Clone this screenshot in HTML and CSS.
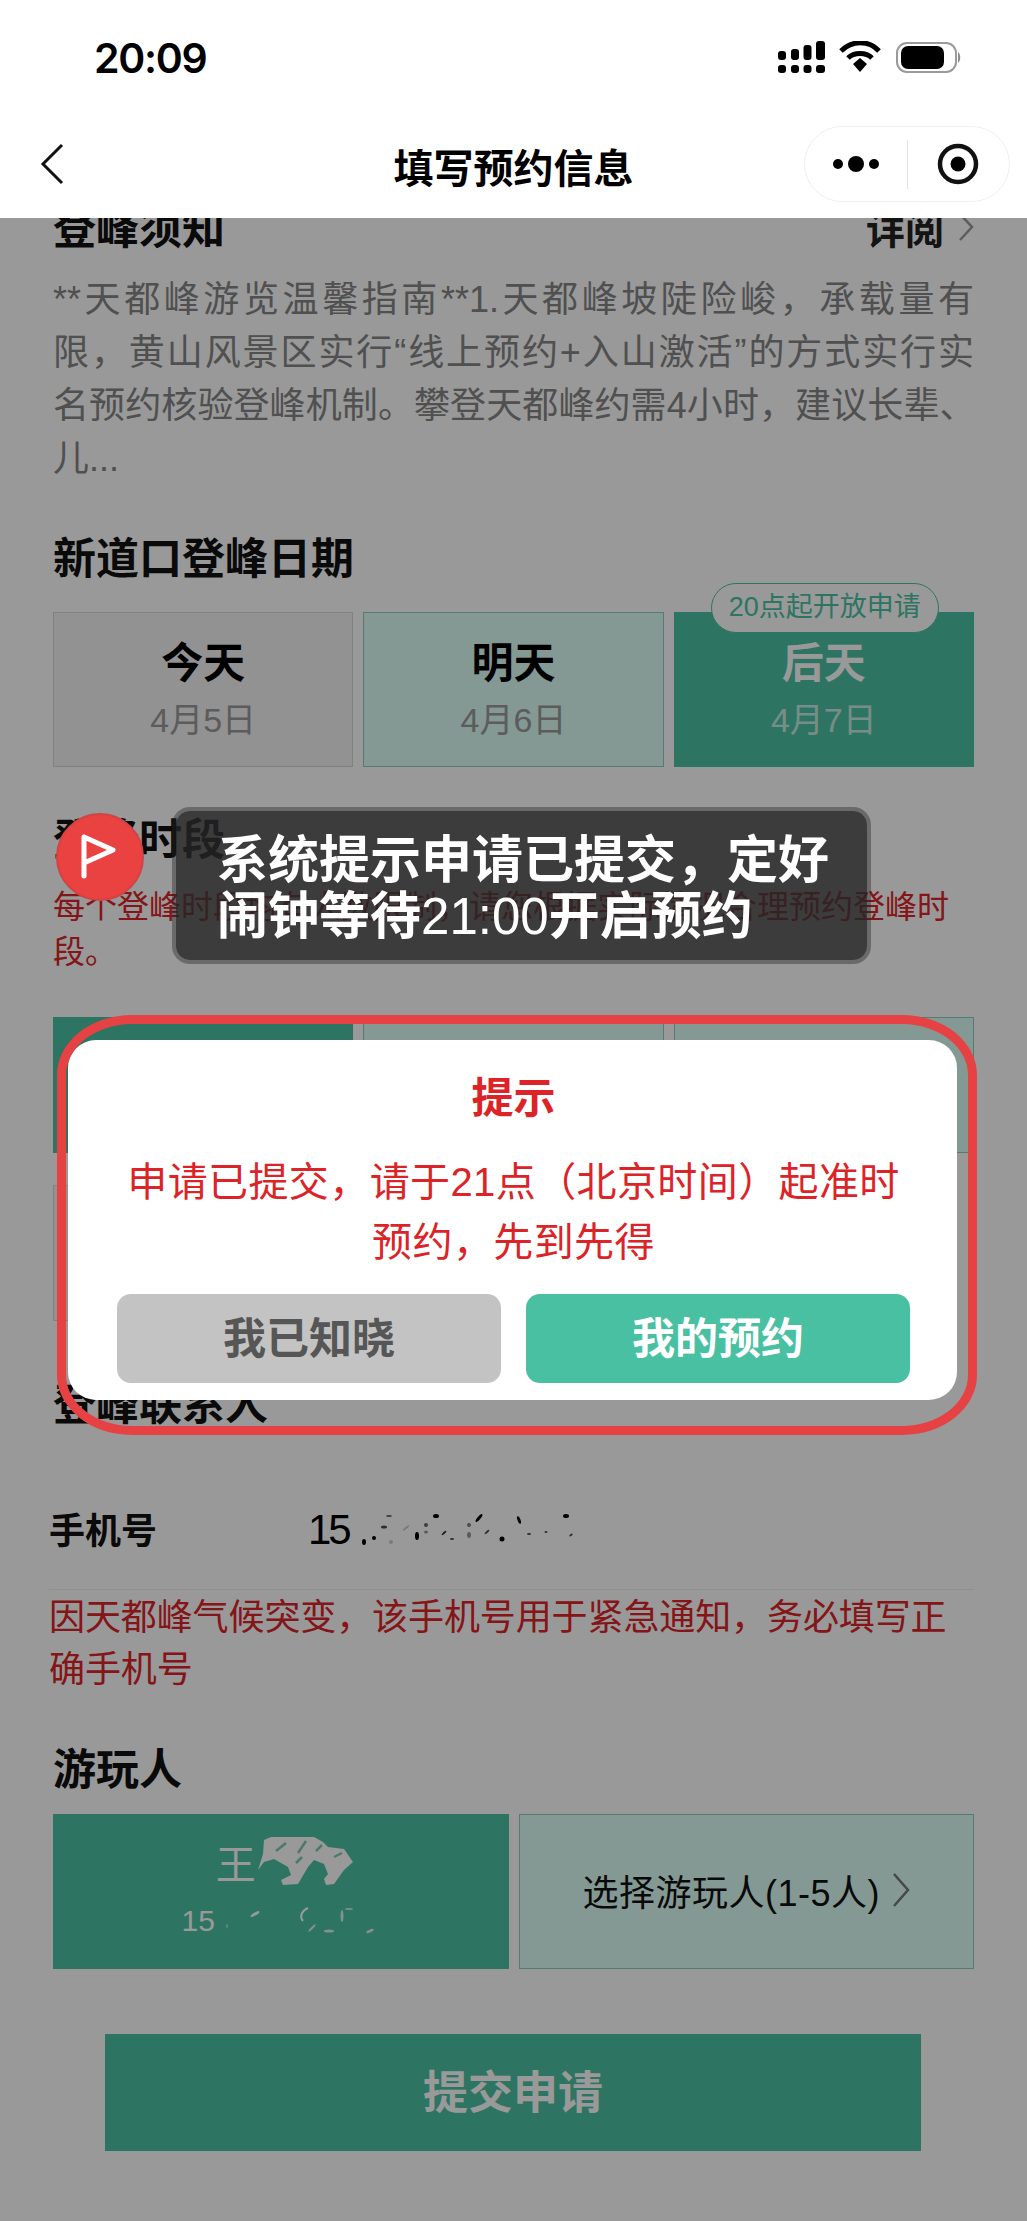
FILE: index.html
```html
<!DOCTYPE html>
<html lang="zh-CN">
<head>
    <meta charset="UTF-8">
    <meta name="viewport" content="width=device-width, initial-scale=1.0">
    <title>填写预约信息</title>
    <link rel="stylesheet" href="styles.css">
</head>
<body>
    <div class="screen">
        <div class="statusbar">
            <span class="time">20:09</span>
            <svg class="status-icons" width="183" height="34" viewBox="0 0 183 34">
                <!-- signal -->
                <rect x="0" y="10" width="8" height="9" rx="3"/>
                <rect x="13" y="8" width="8" height="11" rx="3"/>
                <rect x="25.500" y="4" width="8" height="15" rx="3"/>
                <rect x="38" y="0" width="9" height="19" rx="3"/>
                <rect x="0" y="24" width="8" height="8" rx="3"/>
                <rect x="13" y="24" width="8" height="8" rx="3"/>
                <rect x="25.500" y="24" width="8" height="8" rx="3"/>
                <rect x="38" y="24" width="9" height="8" rx="3"/>
                <!-- wifi -->
                <path d="M63 10 C74 -1 91 -1 101 10" fill="none" stroke="#000" stroke-width="5"/>
                <path d="M70 17 C76 11 88 11 94 17" fill="none" stroke="#000" stroke-width="5"/>
                <path d="M75 23 L82 17 L89 23 L82 31 Z"/>
                <!-- battery -->
                <rect x="119" y="2" width="59" height="29" rx="10" fill="none" stroke="#9a9a9a" stroke-width="2"/>
                <rect x="123" y="5" width="43" height="23" rx="7"/>
                <path d="M180 11 C183 13 183 20 180 22 Z" fill="#8e8e8e"/>
            </svg>
        </div>

        <div class="navbar">
            <svg class="back" width="24" height="42" viewBox="0 0 24 42">
                <path d="M22 2 L3 21 L22 40" fill="none" stroke="#111" stroke-width="3"/>
            </svg>
            <div class="nav-title">填写预约信息</div>
            <div class="capsule">
                <div class="cap-btn">
                    <svg width="46" height="16" viewBox="0 0 46 16">
                        <circle cx="5" cy="8" r="5"/>
                        <circle cx="23" cy="8" r="8"/>
                        <circle cx="41" cy="8" r="5"/>
                    </svg>
                </div>
                <span class="cap-line"></span>
                <div class="cap-btn">
                    <svg width="42" height="42" viewBox="0 0 42 42">
                        <circle cx="21" cy="21" r="18" fill="none" stroke="#111" stroke-width="4.500"/>
                        <circle cx="21" cy="21" r="7.500"/>
                    </svg>
                </div>
            </div>
        </div>

        <div class="scroll">
            <div class="content">
                <div class="heading-row">
                    <h2 class="heading">登峰须知</h2>
                    <div class="more">详阅
                        <svg class="chev" width="16" height="30" viewBox="0 0 16 30">
                            <path d="M2 2 L14 15 L2 28" fill="none" stroke="#999" stroke-width="2.500"/>
                        </svg>
                    </div>
                </div>
                <p class="notice">
                    <span class="notice-line">**天都峰游览温馨指南**1.天都峰坡陡险峻，承载量有</span>
                    <span class="notice-line">限，黄山风景区实行“线上预约+入山激活”的方式实行实</span>
                    <span class="notice-line notice-tight">名预约核验登峰机制。攀登天都峰约需4小时，建议长辈、</span>
                    <span class="notice-end">儿...</span>
                </p>

                <h2 class="heading date-heading">新道口登峰日期</h2>
                <div class="tile-grid">
                    <div class="tile tile-off">
                        <div class="tile-name">今天</div>
                        <div class="tile-date">4月5日</div>
                    </div>
                    <div class="tile tile-free">
                        <div class="tile-name">明天</div>
                        <div class="tile-date">4月6日</div>
                    </div>
                    <div class="tile tile-on">
                        <span class="pill">20点起开放申请</span>
                        <div class="tile-name">后天</div>
                        <div class="tile-date">4月7日</div>
                    </div>
                </div>

                <h2 class="heading slot-heading">登峰时段</h2>
                <p class="warn slot-warn">每个登峰时段均有人数限制，请您根据实际情况合理预约登峰时<br>段。</p>
                <div class="slot-grid">
                    <div class="slot tile-on"></div>
                    <div class="slot tile-free"></div>
                    <div class="slot tile-free"></div>
                    <div class="slot tile-off"></div>
                </div>

                <h2 class="heading contact-heading">登峰联系人</h2>
                <div class="phone-row">
                    <span class="phone-label">手机号</span>
                    <span class="phone-value">15</span>
                    <svg class="specks" width="230" height="50" viewBox="0 0 230 50">
                        <ellipse cx="10" cy="37" rx="2" ry="3"/>
                        <ellipse cx="20" cy="33" rx="2" ry="2"/>
                        <ellipse cx="30" cy="22" rx="3" ry="1.500" opacity="0.7"/>
                        <ellipse cx="35" cy="11" rx="3" ry="1" opacity="0.6"/>
                        <ellipse cx="37" cy="37" rx="2" ry="2" opacity="0.2"/>
                        <ellipse cx="52" cy="23" rx="4" ry="1" opacity="0.2" transform="rotate(-40 52 23)"/>
                        <ellipse cx="63" cy="31" rx="2" ry="4"/>
                        <ellipse cx="72" cy="20" rx="2" ry="2" opacity="0.6"/>
                        <ellipse cx="72" cy="27" rx="2" ry="1.500" opacity="0.4"/>
                        <ellipse cx="82" cy="11" rx="3" ry="2"/>
                        <ellipse cx="90" cy="28" rx="3" ry="1" opacity="0.8" transform="rotate(-40 90 28)"/>
                        <ellipse cx="98" cy="34" rx="2" ry="1" opacity="0.7"/>
                        <ellipse cx="115" cy="20" rx="2" ry="2" opacity="0.5"/>
                        <ellipse cx="115" cy="30" rx="2" ry="3" opacity="0.4"/>
                        <ellipse cx="125" cy="13" rx="5" ry="1.500" transform="rotate(-50 125 13)"/>
                        <ellipse cx="133" cy="27" rx="3" ry="1" opacity="0.7" transform="rotate(-40 133 27)"/>
                        <ellipse cx="148" cy="34" rx="2.500" ry="2.500"/>
                        <ellipse cx="165" cy="15" rx="1.500" ry="4" transform="rotate(-20 165 15)"/>
                        <ellipse cx="175" cy="29" rx="2" ry="1" opacity="0.7"/>
                        <ellipse cx="192" cy="27" rx="1.500" ry="1" opacity="0.7"/>
                        <ellipse cx="212" cy="11" rx="3" ry="2"/>
                        <ellipse cx="217" cy="30" rx="2" ry="1" opacity="0.7" transform="rotate(-40 217 30)"/>
                    </svg>
                </div>
                <p class="warn contact-warn">因天都峰气候突变，该手机号用于紧急通知，务必填写正<br>确手机号</p>

                <h2 class="heading visitor-heading">游玩人</h2>
                <div class="visitor-grid">
                    <div class="visitor tile-on">
                        <div class="visitor-name">王
                            <svg class="smudge" width="100" height="50" viewBox="0 0 100 50">
                                <path d="M8 3 L15 0 L58 0 L67 5 L72 10 L88 12 L97 25 L88 33 L78 47 L70 48 L68 42 L72 37 L68 27 L58 23 L52 30 L42 47 L27 48 L25 43 L35 38 L32 30 L18 22 L8 25 L2 33 L7 17 Z" fill="#fff"/>
                                <path d="M20 14 L30 6 M42 16 L50 4 M60 14 L66 8 M78 20 L86 16 M40 26 L46 20" stroke="#7fcab5" stroke-width="2.500" fill="none"/>
                            </svg>
                        </div>
                        <div class="visitor-phone">15
                            <svg class="specks" width="160" height="30" viewBox="0 0 160 30" fill="#fff">
                                <ellipse cx="7" cy="20" rx="1" ry="2" opacity="0.5"/>
                                <ellipse cx="35" cy="8" rx="5" ry="1.500" transform="rotate(-30 35 8)"/>
                                <path d="M88 2 C80 6 80 12 83 15" fill="none" stroke="#fff" stroke-width="2"/>
                                <ellipse cx="92" cy="22" rx="5" ry="1" opacity="0.8" transform="rotate(-45 92 22)"/>
                                <ellipse cx="109" cy="25" rx="5" ry="1.500" opacity="0.8"/>
                                <ellipse cx="122" cy="10" rx="1.500" ry="6" opacity="0.8"/>
                                <ellipse cx="129" cy="3" rx="4" ry="1" opacity="0.7"/>
                                <ellipse cx="150" cy="25" rx="4" ry="1.500" opacity="0.8" transform="rotate(-25 150 25)"/>
                            </svg>
                        </div>
                    </div>
                    <div class="visitor tile-free visitor-pick">选择游玩人(1-5人)
                        <svg class="chev" width="18" height="36" viewBox="0 0 18 36">
                            <path d="M2 2 L16 18 L2 34" fill="none" stroke="#777" stroke-width="2.500"/>
                        </svg>
                    </div>
                </div>

                <div class="submit">提交申请</div>
            </div>
        </div>

        <div class="overlay"></div>

        <div class="flag">
            <svg width="42" height="50" viewBox="0 0 42 50">
                <path d="M5 5 L5 44 M5 5 L34 18 L5 31" fill="none" stroke="#fff" stroke-width="5" stroke-linecap="round" stroke-linejoin="round"/>
            </svg>
        </div>
        <div class="toast">系统提示申请已提交，定好<br>闹钟等待<span class="toast-num">21:00</span>开启预约</div>

        <div class="dialog">
            <div class="dialog-title">提示</div>
            <div class="dialog-body">申请已提交，请于21点（北京时间）起准时<br>预约，先到先得</div>
            <div class="dialog-btns">
                <div class="btn btn-gray">我已知晓</div>
                <div class="btn btn-green">我的预约</div>
            </div>
        </div>
        <div class="ring"></div>
    </div>
</body>
</html>
```

FILE: styles.css
```css
* {
    margin: 0;
    padding: 0;
    box-sizing: border-box;
}

body {
    font-family: "Liberation Sans", "Noto Sans CJK SC", sans-serif;
    background: #fff;
    color: #000;
}

.screen {
    position: relative;
    width: 1027px;
    height: 2221px;
    overflow: hidden;
}

/* status bar + nav */
.statusbar {
    height: 110px;
    padding: 6px 66px 0 94px;
    display: flex;
    justify-content: space-between;
    align-items: center;
}

.time {
    font-family: Inter, sans-serif;
    font-size: 41px;
    font-weight: 600;
    letter-spacing: -1.300px;
}

.navbar {
    height: 108px;
    display: grid;
    grid-template-columns: 1fr auto 1fr;
    align-items: center;
}

.back {
    margin-left: 40px;
}

.nav-title {
    font-size: 40px;
    font-weight: 700;
    padding-top: 4px;
}

.capsule {
    justify-self: end;
    margin-right: 17px;
    width: 206px;
    height: 76px;
    border: 1px solid #efefef;
    border-radius: 38px;
    display: flex;
    align-items: center;
}

.cap-btn {
    flex: 1;
    display: flex;
    justify-content: center;
}

.cap-line {
    width: 1px;
    height: 49px;
    background: #e4e4e4;
}

/* page */
.scroll {
    height: 2003px;
    overflow: hidden;
}

.content {
    margin-top: -19px;
    padding: 0 53px;
}

.heading {
    font-size: 43px;
    line-height: 60px;
    font-weight: 700;
    color: #111;
}

.heading-row {
    display: flex;
    justify-content: space-between;
    align-items: center;
}

.more {
    display: flex;
    align-items: center;
    gap: 14px;
    margin-bottom: 4px;
    font-size: 39px;
    font-weight: 700;
    color: #222;
}

.notice {
    margin-top: 14px;
    font-size: 36px;
    line-height: 53px;
    color: #858585;
    white-space: nowrap;
}

.notice-line {
    display: block;
    text-align: justify;
    text-align-last: justify;
    white-space: normal;
}

.notice-tight {
    letter-spacing: -1.500px;
}

.notice-end {
    display: block;
}

.date-heading {
    margin-top: 44px;
}

.tile-grid {
    margin-top: 23px;
    display: grid;
    grid-template-columns: repeat(3, 1fr);
    gap: 10px;
}

.tile {
    position: relative;
    height: 155px;
    text-align: center;
    border: 1px solid transparent;
}

.tile-off {
    background: #f4f4f4;
    border: 1px solid #d8d8d8;
}

.tile-free {
    background: #dcfff5;
    border: 1px solid #8fcfbd;
}

.tile-on {
    background: #4bc3a3;
    border: 1px solid #4bc3a3;
    color: #fff;
}

.tile-name {
    margin-top: 21px;
    font-size: 42px;
    line-height: 60px;
    font-weight: 700;
}

.tile-date {
    margin-top: 3px;
    font-size: 34px;
    line-height: 46px;
    color: #999;
}

.tile-on .tile-date {
    color: rgba(255, 255, 255, 0.7);
}

.pill {
    position: absolute;
    top: -30px;
    left: 36px;
    width: 228px;
    height: 50px;
    line-height: 46px;
    border: 1px solid #4bc3a3;
    border-radius: 25px;
    background: #fff;
    color: #4bc3a3;
    font-size: 27px;
}

.slot-heading {
    margin-top: 43px;
}

.warn {
    color: #dc2328;
    white-space: nowrap;
}

.slot-warn {
    margin-top: 15px;
    font-size: 32px;
    line-height: 45px;
}

.slot-grid {
    margin-top: 42px;
    display: grid;
    grid-template-columns: repeat(3, 1fr);
    column-gap: 10px;
    row-gap: 32px;
}

.slot {
    height: 136px;
}

.contact-heading {
    margin-top: 54px;
}

.phone-row {
    margin: 35px 0 0 -4px;
    height: 120px;
    display: flex;
    align-items: center;
    border-bottom: 1px solid #eee;
}

.phone-label {
    width: 259px;
    margin-bottom: 4px;
    font-size: 36px;
    font-weight: 700;
    color: #111;
}

.phone-value {
    font-size: 42px;
    letter-spacing: -3px;
}

.specks {
    margin-left: 5px;
    filter: blur(0.6px);
}

.contact-warn {
    margin: 2px 0 0 -4px;
    font-size: 36px;
    line-height: 52px;
    letter-spacing: -0.100px;
}

.visitor-heading {
    margin-top: 44px;
}

.visitor-grid {
    margin-top: 14px;
    display: grid;
    grid-template-columns: 1fr 1fr;
    gap: 10px;
}

.visitor {
    height: 155px;
    display: flex;
    flex-direction: column;
    align-items: center;
    padding-top: 17px;
}

.visitor-name {
    display: flex;
    align-items: center;
    height: 60px;
    padding-left: 10px;
    font-size: 40px;
}

.smudge {
    filter: blur(0.7px);
}

.visitor-phone {
    display: flex;
    align-items: center;
    height: 30px;
    margin-top: 14px;
    font-size: 30px;
}

.visitor-pick {
    flex-direction: row;
    justify-content: center;
    gap: 12px;
    padding: 0 0 4px;
    font-size: 36px;
    letter-spacing: 0.500px;
    color: #111;
}

.submit {
    margin: 65px 0 0 52px;
    width: 816px;
    height: 117px;
    line-height: 120px;
    text-align: center;
    background: #4bc3a3;
    color: #fff;
    font-size: 45px;
    font-weight: 700;
}

/* things over the page */
.overlay {
    position: absolute;
    top: 218px;
    left: 0;
    right: 0;
    bottom: 0;
    background: rgba(0, 0, 0, 0.4);
}

.flag {
    position: absolute;
    left: 56px;
    top: 813px;
    width: 88px;
    height: 88px;
    border-radius: 50%;
    background: #ea4141;
    border: 2px solid #cf4444;
    display: flex;
    align-items: center;
    justify-content: center;
}

.toast {
    position: absolute;
    left: 172px;
    top: 807px;
    width: 699px;
    height: 157px;
    padding: 22px 0 0 41px;
    border: 4px solid rgba(36, 36, 36, 0.4);
    border-radius: 18px;
    background: rgba(36, 36, 38, 0.8);
    background-clip: padding-box;
    color: #fff;
    font-size: 51px;
    line-height: 56px;
    font-weight: 700;
    white-space: nowrap;
}

.toast-num {
    font-weight: 400;
}

.dialog {
    position: absolute;
    left: 68px;
    top: 1040px;
    width: 889px;
    height: 360px;
    padding: 29px 47px 0 49px;
    background: #fff;
    border-radius: 28px;
    text-align: center;
    color: #dc2328;
}

.dialog-title {
    font-size: 42px;
    line-height: 60px;
    font-weight: 700;
}

.dialog-body {
    margin-top: 23px;
    font-size: 40px;
    line-height: 60px;
    letter-spacing: 0.400px;
    white-space: nowrap;
}

.dialog-btns {
    margin-top: 22px;
    display: grid;
    grid-template-columns: 1fr 1fr;
    gap: 25px;
}

.btn {
    height: 89px;
    line-height: 91px;
    border-radius: 14px;
    font-size: 43px;
    font-weight: 700;
}

.btn-gray {
    background: #c3c3c3;
    color: #565656;
}

.btn-green {
    background: #4ac0a2;
    color: #fff;
}

.ring {
    position: absolute;
    left: 57px;
    top: 1015px;
    width: 920px;
    height: 420px;
    border: 9px solid #e64244;
    border-radius: 75px / 60px;
}
```
